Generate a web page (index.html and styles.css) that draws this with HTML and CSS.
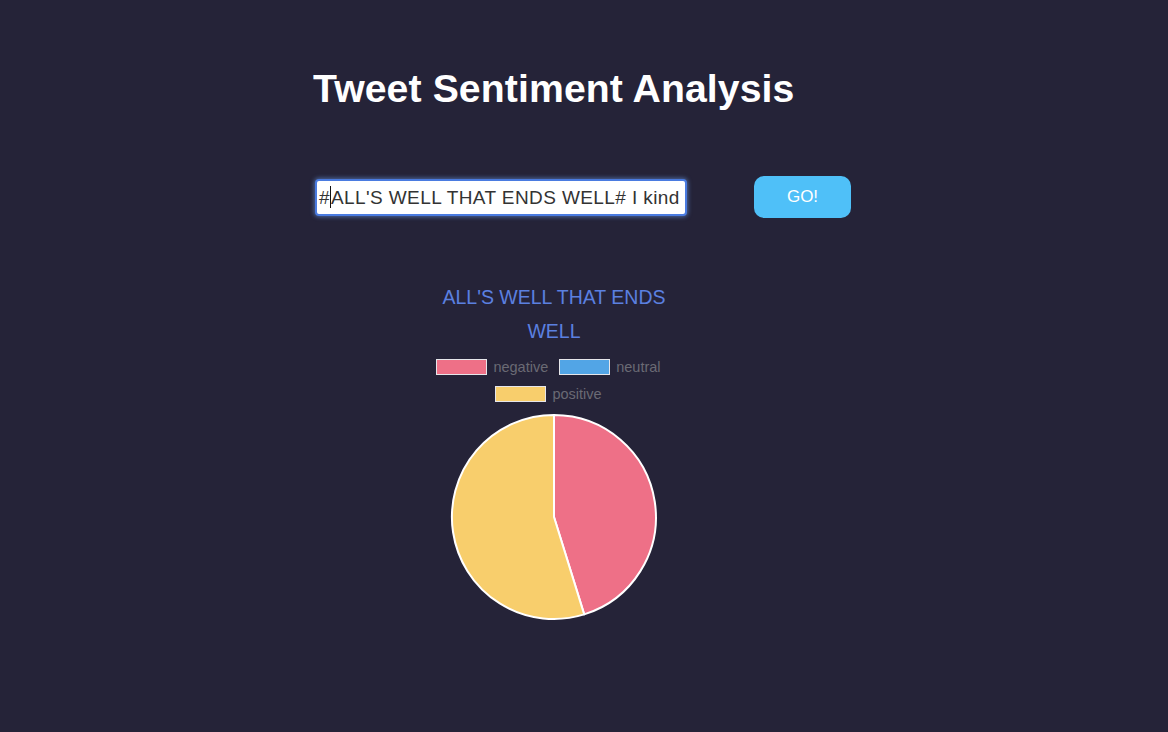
FILE: index.html
```html
<!DOCTYPE html>
<html>
<head>
<meta charset="utf-8">
<link rel="stylesheet" href="styles.css">
</head>
<body>
<div class="page">
  <h1 class="title">Tweet Sentiment Analysis</h1>
  <div class="search-row">
    <div class="input">#<span class="caret"></span>ALL'S WELL THAT ENDS WELL# I kind</div>
    <button class="go">GO!</button>
  </div>
  <div class="chart">
    <div class="chart-inner">
      <div class="chart-title">ALL'S WELL THAT ENDS WELL</div>
      <div class="legend">
        <div class="legend-item"><span class="swatch neg"></span><span class="label">negative</span></div>
        <div class="legend-item"><span class="swatch neu"></span><span class="label">neutral</span></div>
        <div class="legend-item"><span class="swatch pos"></span><span class="label">positive</span></div>
      </div>
      <svg class="pie" width="208" height="208" viewBox="0 0 208 208">
        <path d="M104 104 L104 2 A102 102 0 0 1 134.2 201.4 Z" fill="#ee7087" stroke="#ffffff" stroke-width="2" stroke-linejoin="round"/>
        <path d="M104 104 L134.2 201.4 A102 102 0 1 1 104 2 Z" fill="#f8ce6c" stroke="#ffffff" stroke-width="2" stroke-linejoin="round"/>
      </svg>
    </div>
  </div>
</div>
</body>
</html>
```
FILE: styles.css
```css
html, body {
  margin: 0;
  padding: 0;
  background: #252338;
}
body {
  font-family: "Liberation Sans", Arial, sans-serif;
  min-height: 732px;
}
.page {
  width: 540px;
  margin: 0 auto;
  padding-top: 66px;
}
.title {
  margin: 0;
  font-size: 39.2px;
  line-height: 46px;
  font-weight: bold;
  color: #ffffff;
  margin-left: -1px;
  letter-spacing: 0.1px;
}
.search-row {
  display: flex;
  align-items: center;
  margin-top: 64px;
  padding-left: 3px;
  gap: 69px;
}
.input {
  box-sizing: border-box;
  width: 368px;
  height: 33px;
  background: #ffffff;
  border-radius: 2px;
  box-shadow: 0 0 0 2px #4a7be0, 0 0 4px 3px rgba(110, 160, 240, 0.55);
  font-size: 19px;
  letter-spacing: 0.4px;
  line-height: 33px;
  color: #333333;
  padding: 0 4px 0 2px;
  white-space: nowrap;
  overflow: hidden;
}
.caret {
  display: inline-block;
  width: 1px;
  height: 22px;
  background: #111;
  vertical-align: -4px;
}
.go {
  width: 97px;
  height: 42px;
  border: none;
  border-radius: 10px;
  background: #4fc0f8;
  color: #ffffff;
  font-family: "Liberation Sans", Arial, sans-serif;
  font-size: 17px;
  padding: 0;
}
.chart {
  width: 480px;
  margin-top: 62px;
}
.chart-inner {
  width: 240px;
  margin: 0 auto;
  display: flex;
  flex-direction: column;
  align-items: center;
}
.chart-title {
  font-size: 19.5px;
  line-height: 34px;
  color: #5b80e0;
  text-align: center;
  width: 232px;
}
.legend {
  display: flex;
  flex-wrap: wrap;
  justify-content: center;
  row-gap: 11px;
  margin-top: 11px;
  width: 240px;
}
.legend-item {
  display: flex;
  align-items: center;
  height: 16px;
  margin-right: 11px;
}
.swatch {
  box-sizing: border-box;
  width: 51px;
  height: 16px;
  border: 1px solid #e6e6ea;
  margin-right: 6px;
}
.swatch.neg { background: #ee7087; }
.swatch.neu { background: #52a5e6; }
.swatch.pos { background: #f8ce6c; }
.label {
  font-size: 14.5px;
  line-height: 16px;
  color: #6a6a74;
}
.pie {
  display: block;
  margin-top: 11px;
}
```
